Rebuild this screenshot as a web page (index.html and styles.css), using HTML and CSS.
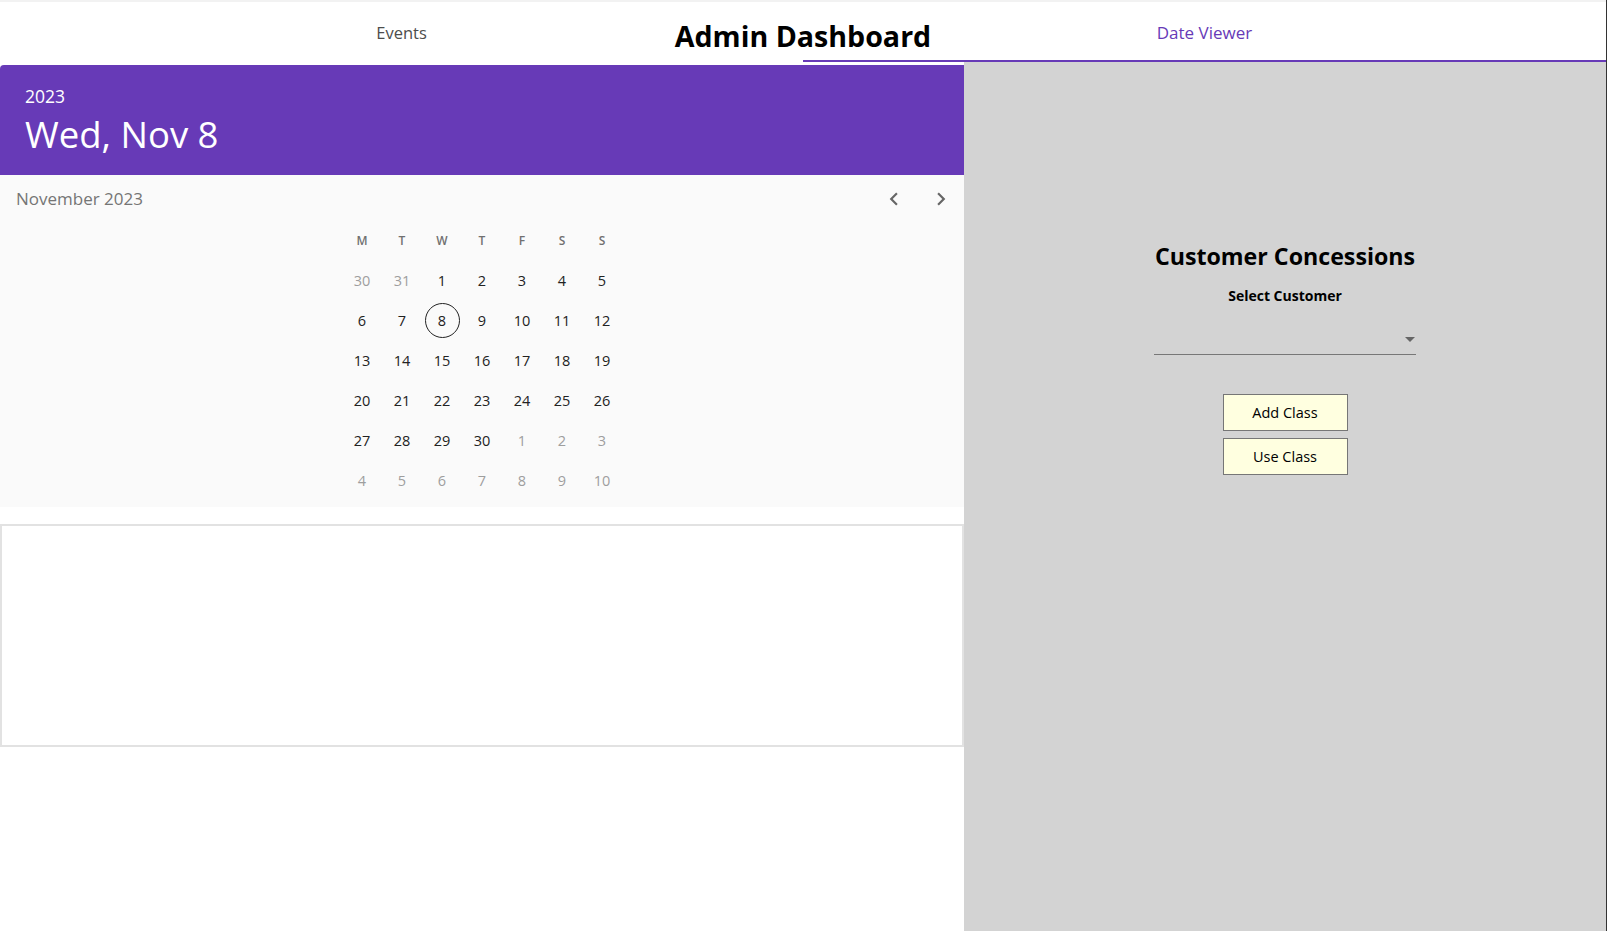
FILE: index.html
```html
<!DOCTYPE html>
<html lang="en">
<head>
<meta charset="utf-8">
<title>Admin Dashboard</title>
<link rel="stylesheet" href="styles.css">
</head>
<body>
<div class="page">
  <div class="topstrip"></div>
  <header class="header">
    <nav class="tabs">
      <div class="tab">Events</div>
      <div class="tab tab-active">Date Viewer</div>
    </nav>
    <h1 class="title">Admin Dashboard</h1>
  </header>
  <main class="main">
    <section class="left">
      <div class="picker">
        <div class="picker-head">
          <div class="picker-year">2023</div>
          <div class="picker-date">Wed, Nov 8</div>
        </div>
        <div class="picker-body">
          <div class="cal-head">
            <div class="cal-month">November 2023</div>
            <div class="cal-nav">
              <span class="nav-btn"><svg width="26" height="26" viewBox="0 0 24 24"><path d="M15.41 7.41L14 6l-6 6 6 6 1.41-1.41L10.83 12z" fill="#666"/></svg></span>
              <span class="nav-btn"><svg width="26" height="26" viewBox="0 0 24 24"><path d="M10 6L8.59 7.41 13.17 12l-4.58 4.59L10 18l6-6z" fill="#666"/></svg></span>
            </div>
          </div>
          <div class="cal-grid">
            <div class="dow">M</div><div class="dow">T</div><div class="dow">W</div><div class="dow">T</div><div class="dow">F</div><div class="dow">S</div><div class="dow">S</div>
            <div class="day out">30</div><div class="day out">31</div><div class="day">1</div><div class="day">2</div><div class="day">3</div><div class="day">4</div><div class="day">5</div>
            <div class="day">6</div><div class="day">7</div><div class="day"><span class="sel">8</span></div><div class="day">9</div><div class="day">10</div><div class="day">11</div><div class="day">12</div>
            <div class="day">13</div><div class="day">14</div><div class="day">15</div><div class="day">16</div><div class="day">17</div><div class="day">18</div><div class="day">19</div>
            <div class="day">20</div><div class="day">21</div><div class="day">22</div><div class="day">23</div><div class="day">24</div><div class="day">25</div><div class="day">26</div>
            <div class="day">27</div><div class="day">28</div><div class="day">29</div><div class="day">30</div><div class="day out">1</div><div class="day out">2</div><div class="day out">3</div>
            <div class="day out">4</div><div class="day out">5</div><div class="day out">6</div><div class="day out">7</div><div class="day out">8</div><div class="day out">9</div><div class="day out">10</div>
          </div>
        </div>
      </div>
      <div class="events-box"></div>
    </section>
    <section class="right">
      <h2 class="cc-title">Customer Concessions</h2>
      <div class="cc-label">Select Customer</div>
      <div class="select">
        <svg class="select-arrow" width="24" height="24" viewBox="0 0 24 24"><path d="M7 10l5 5 5-5z" fill="#666"/></svg>
      </div>
      <div class="buttons">
        <button class="btn">Add Class</button>
        <button class="btn">Use Class</button>
      </div>
    </section>
  </main>
</div>
</body>
</html>
```
FILE: styles.css
```css
* { box-sizing: border-box; }
html, body { margin: 0; padding: 0; }
body {
  font-family: "Open Sans", "Noto Sans", sans-serif;
  background: #fff;
  color: #000;
}
.page {
  width: 1607px;
  height: 931px;
  border-right: 1px solid #333;
  display: flex;
  flex-direction: column;
  overflow: hidden;
}
.topstrip { height: 2px; background: #f2f2f2; }
.header { position: relative; height: 60px; }
.tabs { display: grid; grid-template-columns: 1fr 1fr; height: 60px; }
.tab {
  display: flex; align-items: center; justify-content: center;
  font-size: 16.5px; color: #4d4d4d; padding-top: 2px;
  border-bottom: 2px solid transparent;
}
.tab-active { color: #673ab7; border-bottom-color: #673ab7; font-size: 17px; }
.title {
  position: absolute; left: 50%; top: 14px; transform: translateX(-50%);
  margin: 0; font-size: 28.6px; font-weight: 700; line-height: 40px; white-space: nowrap;
}
.main { flex: 1; display: flex; }
.left { width: 964px; padding-top: 3px; display: flex; flex-direction: column; }
.picker { background: #fafafa; }
.picker-head {
  background: #673ab7; color: #fff; height: 110px;
  padding: 19px 25px 0; border-top-left-radius: 4px;
}
.picker-year { font-size: 17.5px; line-height: 24px; }
.picker-date { font-size: 36.5px; line-height: 52px; }
.picker-body { height: 332px; padding-bottom: 6px; }
.cal-head { height: 45px; display: flex; align-items: center; justify-content: space-between; padding: 2px 10px 0 16px; }
.cal-month { font-size: 17px; color: #757575; }
.cal-nav { display: flex; gap: 21px; }
.nav-btn { display: flex; width: 26px; height: 26px; }
.cal-grid {
  display: grid; grid-template-columns: repeat(7, 40px); grid-auto-rows: 40px;
  justify-content: center;
}
.dow { display: flex; align-items: center; justify-content: center; font-size: 12px; font-weight: 600; color: #707070; }
.day { display: flex; align-items: center; justify-content: center; font-size: 14.5px; color: #222; }
.day.out { color: #9e9e9e; }
.sel {
  width: 35px; height: 35px; border-radius: 50%; border: 1px solid #222;
  display: flex; align-items: center; justify-content: center;
}
.events-box { margin-top: 17px; height: 223px; border: 2px solid #e2e2e2; background: #fff; }
.right {
  flex: 1; background: #d3d3d3; display: flex; flex-direction: column; align-items: center;
  padding-top: 178px;
}
.cc-title { margin: 0; font-size: 23.2px; font-weight: 700; line-height: 32px; }
.cc-label { margin-top: 14px; font-size: 14px; font-weight: 700; line-height: 20px; }
.select {
  position: relative; width: 262px; height: 40px; margin-top: 9px;
  border-bottom: 1px solid #777;
}
.select-arrow { position: absolute; right: -6px; top: 12px; }
.buttons { display: flex; flex-direction: column; gap: 7px; margin-top: 39px; }
.btn {
  width: 125px; height: 37px; background: #ffffe0; border: 1px solid #767676;
  font-family: inherit; font-size: 14.5px; color: #000; padding: 0; border-radius: 0;
}
```
